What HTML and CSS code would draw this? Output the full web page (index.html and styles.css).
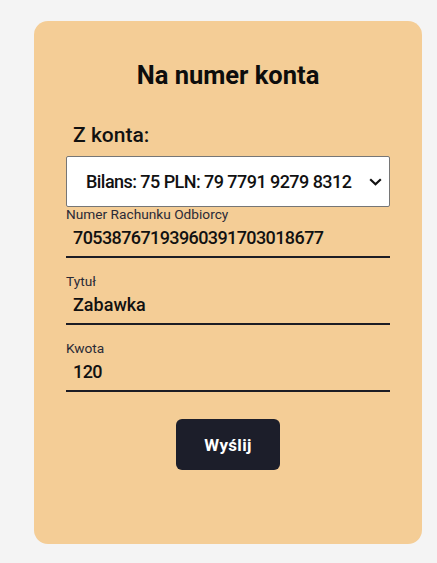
FILE: index.html
```html
<!DOCTYPE html>
<html lang="pl">
<head>
<meta charset="utf-8">
<link rel="stylesheet" href="styles.css">
</head>
<body>
<div class="card">
  <h2 class="title">Na numer konta</h2>
  <form class="form">
    <label class="from-label" for="acc">Z konta:</label>
    <select id="acc" class="select">
      <option>Bilans: 75 PLN: 79 7791 9279 8312</option>
    </select>
    <div class="field">
      <label class="label">Numer Rachunku Odbiorcy</label>
      <input class="input input-num" type="text" value="70538767193960391703018677">
    </div>
    <div class="field">
      <label class="label">Tytuł</label>
      <input class="input" type="text" value="Zabawka">
    </div>
    <div class="field">
      <label class="label">Kwota</label>
      <input class="input input-num" type="text" value="120">
    </div>
    <div class="actions">
      <button type="button" class="btn">Wyślij</button>
    </div>
  </form>
</div>
</body>
</html>
```
FILE: styles.css
```css
html, body {
  margin: 0;
  padding: 0;
  background: #f4f4f4;
}
body {
  padding: 21px 15px 0 34px;
  font-family: Roboto, "Liberation Sans", sans-serif;
  color: #111;
}
.card {
  box-sizing: border-box;
  width: 388px;
  height: 523px;
  background: #f4cd96;
  border-radius: 14px;
  padding: 38px 32px 0 32px;
  display: flex;
  flex-direction: column;
}
.title {
  margin: 0;
  text-align: center;
  font-size: 25.5px;
  font-weight: 700;
  line-height: 32px;
  color: #0d0d0d;
}
.form {
  display: flex;
  flex-direction: column;
  margin-top: 29px;
}
.from-label {
  font-size: 21px;
  font-weight: 500;
  padding: 3px 0 0 7px;
  line-height: 24px;
  margin-bottom: 9px;
  color: #111;
}
.select {
  -webkit-appearance: none;
  appearance: none;
  box-sizing: border-box;
  width: 324px;
  height: 51px;
  font-family: inherit;
  font-size: 18px;
  font-weight: 500;
  letter-spacing: -0.55px;
  padding: 0 30px 0 19px;
  background: #fff url("data:image/svg+xml,%3Csvg xmlns='http://www.w3.org/2000/svg' width='13' height='8' viewBox='0 0 13 8'%3E%3Cpath d='M1.2 1.2 L6.5 6.3 L11.8 1.2' fill='none' stroke='%23111' stroke-width='2.2'/%3E%3C/svg%3E") no-repeat right 7px center;
  border: 1px solid #767676;
  border-radius: 2px;
  color: #111;
}
.field {
  display: flex;
  flex-direction: column;
}
.field + .field {
  margin-top: 16px;
}
.label {
  font-size: 13.7px;
  line-height: 15px;
  color: #2a2a36;
}
.input {
  box-sizing: border-box;
  width: 324px;
  height: 36px;
  border: 0;
  border-bottom: 2px solid #1c1c24;
  background: transparent;
  font-family: inherit;
  font-size: 18px;
  font-weight: 500;
  padding: 0 7px 3px 7px;
  color: #111;
  outline: none;
}
.input-num {
  letter-spacing: -0.6px;
}
.actions {
  display: flex;
  justify-content: center;
  margin-top: 27px;
}
.btn {
  width: 104px;
  height: 51px;
  border: 0;
  border-radius: 6px;
  background: #1c1e2a;
  color: #fff;
  font-family: inherit;
  font-size: 17px;
  font-weight: 700;
  letter-spacing: 0.3px;
}
```
